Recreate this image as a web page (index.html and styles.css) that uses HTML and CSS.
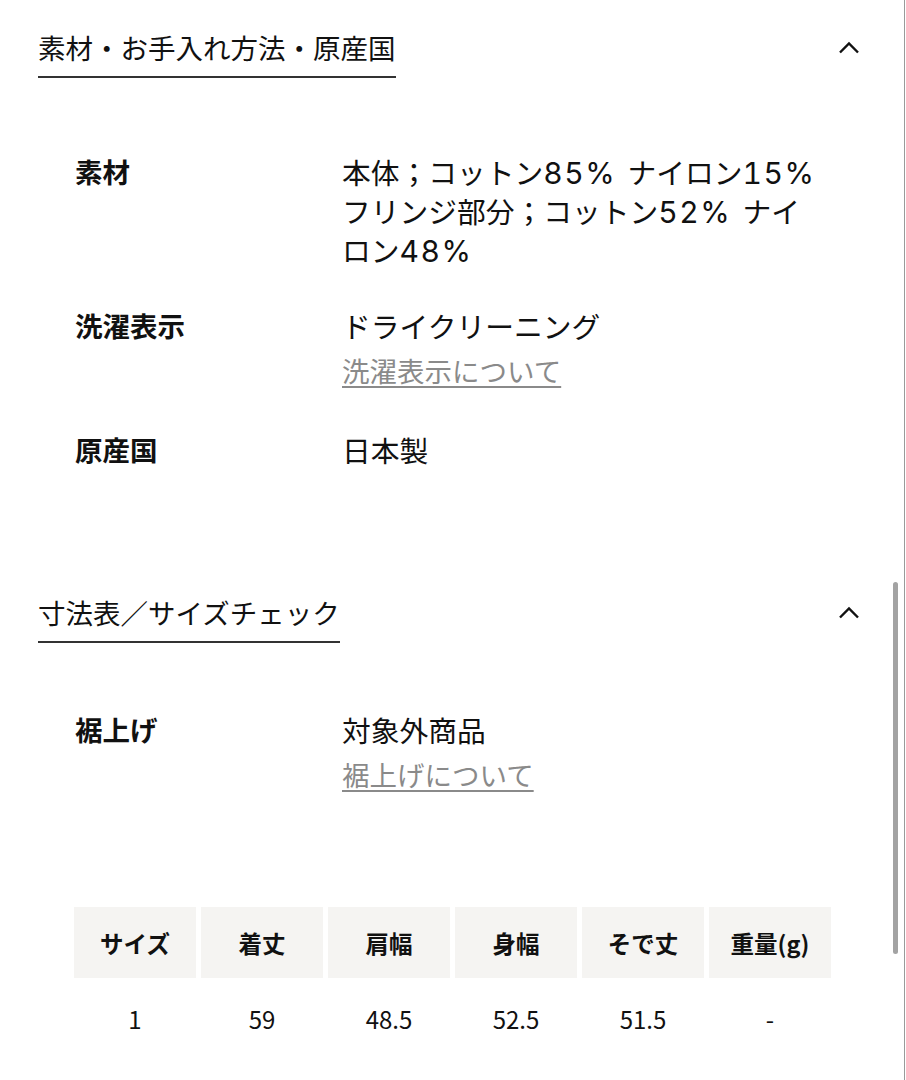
FILE: index.html
```html
<!DOCTYPE html>
<html lang="ja">
<head>
<meta charset="utf-8">
<title>素材・お手入れ方法・原産国</title>
<link rel="stylesheet" href="styles.css">
</head>
<body>
<div class="page">
  <section class="section">
    <div class="sec-head">
      <h2 class="sec-title">素材・お手入れ方法・原産国</h2>
      <span class="chev"><svg width="22" height="13" viewBox="0 0 22 13"><path d="M2 11.5 L11 2.5 L20 11.5" fill="none" stroke="#111" stroke-width="2.4"/></svg></span>
    </div>
    <div class="sec-body sec-body--first">
      <dl class="spec">
        <div class="spec-row">
          <dt class="spec-label">素材</dt>
          <dd class="spec-value">本体；コットン<span class="num">85%</span> ナイロン<span class="num">15%</span><br>フリンジ部分；コットン<span class="num">52%</span> ナイロン<span class="num">48%</span></dd>
        </div>
        <div class="spec-row">
          <dt class="spec-label">洗濯表示</dt>
          <dd class="spec-value">ドライクリーニング<a class="spec-link" href="#">洗濯表示について</a></dd>
        </div>
        <div class="spec-row">
          <dt class="spec-label">原産国</dt>
          <dd class="spec-value">日本製</dd>
        </div>
      </dl>
    </div>
  </section>

  <section class="section section--second">
    <div class="sec-head">
      <h2 class="sec-title">寸法表／サイズチェック</h2>
      <span class="chev"><svg width="22" height="13" viewBox="0 0 22 13"><path d="M2 11.5 L11 2.5 L20 11.5" fill="none" stroke="#111" stroke-width="2.4"/></svg></span>
    </div>
    <div class="sec-body sec-body--second">
      <dl class="spec">
        <div class="spec-row">
          <dt class="spec-label">裾上げ</dt>
          <dd class="spec-value">対象外商品<a class="spec-link" href="#">裾上げについて</a></dd>
        </div>
      </dl>
      <div class="size-table">
        <div class="th">サイズ</div>
        <div class="th">着丈</div>
        <div class="th">肩幅</div>
        <div class="th">身幅</div>
        <div class="th">そで丈</div>
        <div class="th">重量(g)</div>
        <div class="td">1</div>
        <div class="td">59</div>
        <div class="td">48.5</div>
        <div class="td">52.5</div>
        <div class="td">51.5</div>
        <div class="td">-</div>
      </div>
    </div>
  </section>
</div>
<div class="scrollbar"></div>
<div class="frame-edge"></div>
</body>
</html>
```

FILE: styles.css
```css
html, body {
  margin: 0;
  padding: 0;
  background: #fff;
}
body {
  font-family: "Noto Sans CJK JP", "Noto Sans", sans-serif;
  color: #111;
  width: 906px;
  height: 1080px;
  overflow: hidden;
}
.page {
  padding: 0 46px 0 38px;
}
.sec-head {
  display: flex;
  justify-content: space-between;
  align-items: flex-start;
  padding-top: 28px;
}
.sec-title {
  margin: 0;
  font-size: 27.5px;
  font-weight: 400;
  line-height: 39px;
  padding-bottom: 9px;
  border-bottom: 2px solid #333;
  color: #111;
}
.chev {
  height: 39px;
  display: flex;
  align-items: center;
}
.chev svg { display: block; }
.sec-body {
  padding-left: 37px;
}
.sec-body--first {
  padding-top: 74px;
  padding-bottom: 96px;
}
.sec-body--second {
  padding-top: 67px;
}
.spec {
  margin: 0;
  display: flex;
  flex-direction: column;
  gap: 37px;
}
.spec-row {
  display: grid;
  grid-template-columns: 267px 482px;
}
.spec-label {
  margin: 0;
  font-size: 27.5px;
  font-weight: 700;
  line-height: 39px;
}
.spec-value {
  margin: 0;
  font-size: 28.75px;
  line-height: 39px;
  word-spacing: 5px;
}
.num {
  font-family: "Inter", "Noto Sans", sans-serif;
  font-size: 30px;
  line-height: 1;
  letter-spacing: 1.5px;
  font-variant-numeric: tabular-nums;
  font-weight: 400;
}
.spec-link {
  display: block;
  margin-top: 6px;
  margin-bottom: 3px;
  font-size: 27.5px;
  line-height: 39px;
  word-spacing: 0;
  color: #8a8a8a;
  text-decoration: underline;
  text-decoration-thickness: 1.5px;
  text-underline-offset: 4px;
}
.size-table {
  margin-top: 110px;
  margin-left: -1px;
  display: grid;
  grid-template-columns: repeat(6, 122px);
  grid-auto-rows: 71px;
  gap: 5px;
}
.th, .td {
  display: flex;
  align-items: center;
  justify-content: center;
  font-size: 23.5px;
}
.th {
  background: #f5f4f2;
  font-weight: 700;
}
.td {
  font-weight: 400;
  font-size: 24px;
}
.scrollbar {
  position: fixed;
  top: 582px;
  right: 8px;
  width: 5px;
  height: 372px;
  border-radius: 3px;
  background: #a3a3a3;
}
.frame-edge {
  position: fixed;
  top: 0;
  right: 1px;
  width: 1px;
  height: 1080px;
  background: #9a9a9a;
}
```
